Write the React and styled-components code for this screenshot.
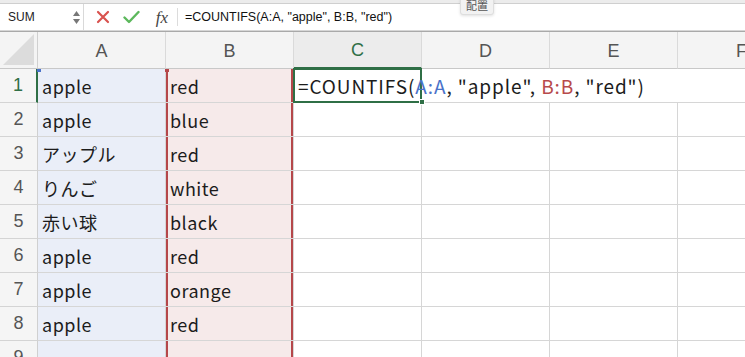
import React from "react";
import styled, { createGlobalStyle } from "styled-components";

const GlobalStyle = createGlobalStyle`
  html, body {
    margin: 0;
    padding: 0;
    background: #ffffff;
    overflow: hidden;
  }
  body {
    font-family: "Noto Sans CJK JP", "Noto Sans", sans-serif;
  }
`;

const Page = styled.div`
  width: 745px;
  height: 357px;
  overflow: hidden;
  position: relative;
  background: #fff;
`;

const TopStrip = styled.div`
  height: 3px;
  background: #ececec;
  border-bottom: 1px solid #cfcfcf;
`;

const FormulaBar = styled.div`
  display: flex;
  align-items: center;
  height: 26px;
  background: #fff;
  border-bottom: 1px solid #d6d6d6;
  box-shadow: 0 1px 0 #a9a9a9;
  margin-bottom: 1px;
  font-family: "Liberation Sans", Arial, sans-serif;
`;

const NameBox = styled.div`
  width: 84px;
  height: 100%;
  box-sizing: border-box;
  display: flex;
  align-items: center;
  justify-content: space-between;
  padding: 0 2px 0 8px;
  font-size: 12px;
  color: #222;
  border-right: 1px solid #d9d9d9;
`;

const Stepper = styled.div`
  display: flex;
  flex-direction: column;
  gap: 3px;
  padding-right: 1px;
`;

const IconGroup = styled.div`
  display: flex;
  align-items: center;
  padding-left: 12px;
  gap: 13px;
  border-right: 1px solid #dcdcdc;
  height: 18px;
  padding-right: 6px;
`;

const Fx = styled.span`
  font-family: "Liberation Serif", "Times New Roman", serif;
  font-style: italic;
  font-size: 17px;
  color: #444;
  width: 18px;
  text-align: center;
  line-height: 1;
`;

const FormulaText = styled.div`
  padding-left: 7px;
  font-size: 12.5px;
  color: #111;
  white-space: nowrap;
`;

const Tooltip = styled.div`
  position: absolute;
  top: -3px;
  left: 460px;
  padding: 1px 5px 2px;
  font-size: 11px;
  line-height: 13px;
  color: #555;
  background: #f2f2f2;
  border: 1px solid #dedede;
  border-radius: 3px;
  box-shadow: 0 1px 3px rgba(0, 0, 0, 0.12);
`;

const Grid = styled.div`
  display: grid;
  grid-template-columns: 38px repeat(6, 128px);
  grid-auto-rows: 34px;
  grid-template-rows: 37px;
`;

const Corner = styled.div`
  background: #f4f4f4;
  border-right: 1px solid #d0d0d0;
  border-bottom: 1px solid #c8c8c8;
  position: relative;
  overflow: hidden;
  &::after {
    content: "";
    position: absolute;
    right: 3px;
    bottom: 3px;
    width: 0;
    height: 0;
    border-left: 31px solid transparent;
    border-bottom: 31px solid #dcdcdc;
  }
`;

const ColHeader = styled.div`
  display: flex;
  align-items: center;
  justify-content: center;
  background: ${(p) => (p.$active ? "#ececec" : "#f4f4f4")};
  border-right: 1px solid #dadada;
  border-bottom: ${(p) => (p.$active ? "2px solid #2f6f46" : "1px solid #c8c8c8")};
  color: ${(p) => (p.$active ? "#2f6f46" : "#555")};
  font-family: "Liberation Sans", Arial, sans-serif;
  font-size: 18px;
  box-sizing: border-box;
  padding-top: 2px;
`;

const RowHeader = styled.div`
  display: flex;
  align-items: center;
  justify-content: center;
  background: #f5f5f5;
  border-bottom: 1px solid #d4d4d4;
  border-right: ${(p) => (p.$active ? "2px solid #2f6f46" : "1px solid #d0d0d0")};
  color: ${(p) => (p.$active ? "#2f6f46" : "#555")};
  font-family: "Liberation Sans", Arial, sans-serif;
  font-size: 18px;
  box-sizing: border-box;
`;

const rangeTint = {
  A: "#eaeef8",
  B: "#f6eaea",
};

const Cell = styled.div`
  display: flex;
  align-items: center;
  padding-left: 4px;
  box-sizing: border-box;
  font-size: 18px;
  letter-spacing: 0.5px;
  color: #1c1c1c;
  white-space: nowrap;
  background: ${(p) => rangeTint[p.$col] || "#fff"};
  border-bottom: 1px solid #d6d6d6;
  border-right: ${(p) => (p.$spill ? "none" : "1px solid #d6d6d6")};
  box-shadow: ${(p) =>
    p.$col === "B" ? "inset 2px 0 #b5474a, inset -2px 0 #b5474a" : "none"};
  position: relative;
`;

const ActiveCell = styled(Cell)`
  z-index: 2;
  overflow: visible;
  border-right: none;
  border-bottom: none;
  box-shadow: inset 0 0 0 2px #2f6f46;
  margin-left: -1px;
  padding-left: 5px;
  height: 35px;
  margin-top: -1px;
  font-size: 19px;
  letter-spacing: 0.9px;
  white-space: pre;
`;

const Handle = styled.span`
  position: absolute;
  right: -3px;
  bottom: -2px;
  width: 6px;
  height: 6px;
  background: #2f6f46;
  border: 1px solid #fff;
  box-sizing: border-box;
`;

const RangeMark = styled.span`
  position: absolute;
  top: 0;
  left: ${(p) => p.$left}px;
  width: 4px;
  height: 3px;
  background: ${(p) => p.$color};
`;

const Ref = styled.span`
  color: ${(p) => p.$color};
`;

const words = [
  ["apple", "red"],
  ["apple", "blue"],
  ["アップル", "red"],
  ["りんご", "white"],
  ["赤い球", "black"],
  ["apple", "red"],
  ["apple", "orange"],
  ["apple", "red"],
  ["", ""],
];

const cols = ["A", "B", "C", "D", "E", "F"];

function CrossIcon() {
  return (
    <svg width="14" height="14" viewBox="0 0 14 14">
      <path d="M2 2 L12 12 M12 2 L2 12" stroke="#d9534f" strokeWidth="2.2" strokeLinecap="round" />
    </svg>
  );
}

function CheckIcon() {
  return (
    <svg width="17" height="14" viewBox="0 0 17 14">
      <path d="M1.5 7.5 L6 12 L15.5 2" stroke="#5cb85c" strokeWidth="2.4" fill="none" strokeLinecap="round" strokeLinejoin="round" />
    </svg>
  );
}

function StepArrows() {
  return (
    <Stepper>
      <svg width="7" height="5" viewBox="0 0 7 5">
        <path d="M0 5 L3.5 0 L7 5 Z" fill="#777" />
      </svg>
      <svg width="7" height="5" viewBox="0 0 7 5">
        <path d="M0 0 L3.5 5 L7 0 Z" fill="#777" />
      </svg>
    </Stepper>
  );
}

function Formula() {
  return (
    <span>
      {"=COUNTIFS("}
      <Ref $color="#4a72c9">A:A</Ref>
      {', "apple", '}
      <Ref $color="#b84a4c">B:B</Ref>
      {', "red")'}
    </span>
  );
}

export default function App() {
  return (
    <Page>
      <GlobalStyle />
      <TopStrip />
      <FormulaBar>
        <NameBox>
          SUM
          <StepArrows />
        </NameBox>
        <IconGroup>
          <CrossIcon />
          <CheckIcon />
          <Fx>fx</Fx>
        </IconGroup>
        <FormulaText>=COUNTIFS(A:A, "apple", B:B, "red")</FormulaText>
      </FormulaBar>
      <Tooltip>配置</Tooltip>
      <Grid>
        <Corner />
        {cols.map((c) => (
          <ColHeader key={c} $active={c === "C"}>
            {c}
          </ColHeader>
        ))}
        {words.map(([a, b], i) => (
          <React.Fragment key={i}>
            <RowHeader $active={i === 0}>{i + 1}</RowHeader>
            <Cell $col="A">
              {i === 0 && <RangeMark $left={-1} $color="#4a72c9" />}
              {a}
            </Cell>
            <Cell $col="B">
              {i === 0 && <RangeMark $left={-1} $color="#b5474a" />}
              {i === 0 && <RangeMark $left={125} $color="#b5474a" />}
              {b}
            </Cell>
            {i === 0 ? (
              <ActiveCell $col="C">
                <Formula />
                <Handle />
              </ActiveCell>
            ) : (
              <Cell $col="C" />
            )}
            <Cell $col="D" $spill={i === 0} />
            <Cell $col="E" $spill={i === 0} />
            <Cell $col="F" />
          </React.Fragment>
        ))}
      </Grid>
    </Page>
  );
}
